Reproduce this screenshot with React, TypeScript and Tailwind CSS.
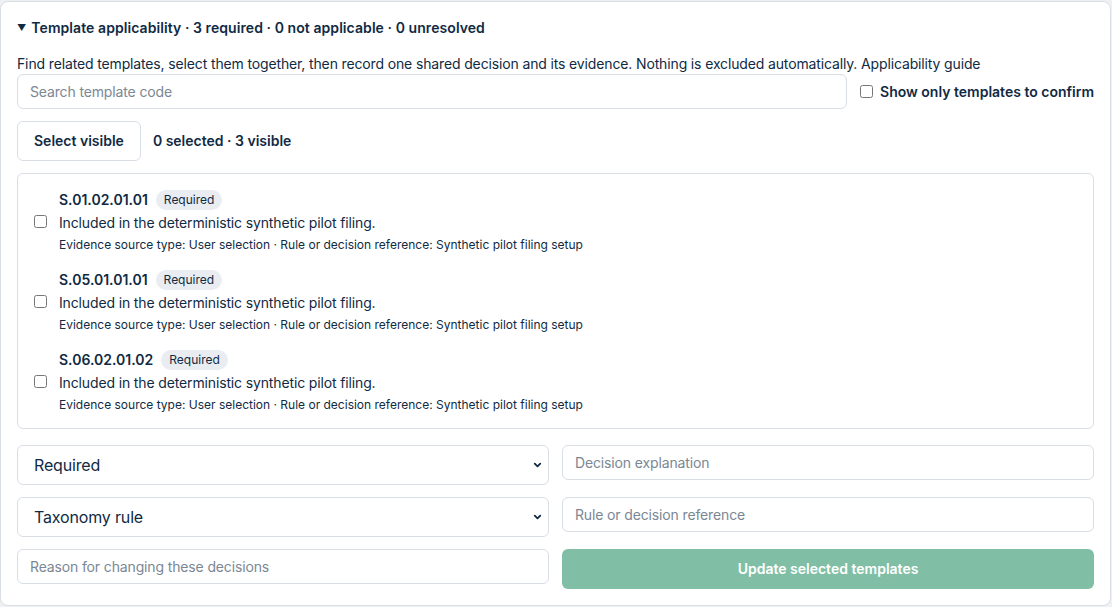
import { ChevronDown } from "lucide-react";

const templates = [
  { code: "S.01.02.01.01" },
  { code: "S.05.01.01.01" },
  { code: "S.06.02.01.02" },
];

function TemplateRow({ code }: { code: string }) {
  return (
    <div className="flex items-center gap-3">
      <input type="checkbox" className="m-0 h-[13px] w-[13px] shrink-0" />
      <div className="flex flex-col">
        <div className="flex h-5 items-center gap-2">
          <span className="text-sm font-semibold">{code}</span>
          <span className="rounded-full bg-[#e9edf2] px-2 py-0.5 text-xs leading-4">Required</span>
        </div>
        <p className="mt-[3px] text-sm leading-5 tracking-[-0.01em]">
          Included in the deterministic synthetic pilot filing.
        </p>
        <p className="mt-1 text-xs leading-4">
          Evidence source type: User selection · Rule or decision reference: Synthetic pilot filing setup
        </p>
      </div>
    </div>
  );
}

function Select({ value }: { value: string }) {
  return (
    <div className="relative">
      <select className="h-10 w-full appearance-none rounded-md border border-[#d9dee5] bg-white px-4 text-base tracking-[-0.01em] outline-none">
        <option>{value}</option>
      </select>
      <ChevronDown
        className="pointer-events-none absolute right-1.5 top-1/2 h-[11px] w-[11px] -translate-y-1/2"
        strokeWidth={4}
      />
    </div>
  );
}

function Field({ placeholder }: { placeholder: string }) {
  return (
    <input
      type="text"
      placeholder={placeholder}
      className="h-[35px] rounded-md border border-[#d9dee5] px-3 text-sm tracking-[-0.01em] placeholder:text-[#7b8794] outline-none"
    />
  );
}

export default function App() {
  return (
    <div
      className="min-h-screen bg-[#eef0f3] pb-0.5 pr-px pt-px text-[#102a43]"
      style={{ fontFamily: "Inter, 'Liberation Sans', sans-serif" }}
    >
      <section className="rounded-lg border border-[#d9dee5] bg-white p-4">
        <div className="flex h-5 items-center gap-[5px] text-sm font-semibold">
          <span className="text-[9px]">▼</span>
          <span className="tracking-[0.005em]">
            Template applicability · 3 required · 0 not applicable · 0 unresolved
          </span>
        </div>

        <p className="mt-4 text-sm leading-5 tracking-[-0.01em]">
          Find related templates, select them together, then record one shared decision and its evidence. Nothing is
          excluded automatically. Applicability guide
        </p>

        <div className="flex items-center gap-[13px]">
          <input
            type="text"
            placeholder="Search template code"
            className="h-[35px] flex-1 rounded-md border border-[#d9dee5] px-3 text-sm tracking-[-0.01em] placeholder:text-[#7b8794] outline-none"
          />
          <label className="flex items-center gap-[7px] text-sm font-semibold">
            <input type="checkbox" className="m-0 h-[13px] w-[13px]" />
            Show only templates to confirm
          </label>
        </div>

        <div className="mt-3 flex items-center gap-3">
          <button className="h-10 rounded-md border border-[#d9dee5] bg-white px-4 text-sm font-semibold">
            Select visible
          </button>
          <span className="text-sm font-semibold">0 selected · 3 visible</span>
        </div>

        <div className="mt-3 flex flex-col gap-[17px] rounded-md border border-[#d9dee5] px-4 pb-[15px] pt-4">
          {templates.map((t) => (
            <TemplateRow key={t.code} code={t.code} />
          ))}
        </div>

        <div className="mt-4 grid grid-cols-2 items-start gap-x-[13px] gap-y-3">
          <Select value="Required" />
          <Field placeholder="Decision explanation" />
          <Select value="Taxonomy rule" />
          <Field placeholder="Rule or decision reference" />
          <Field placeholder="Reason for changing these decisions" />
          <button className="h-10 rounded-md bg-[#80bfa6] text-sm font-semibold text-white">
            Update selected templates
          </button>
        </div>
      </section>
    </div>
  );
}
